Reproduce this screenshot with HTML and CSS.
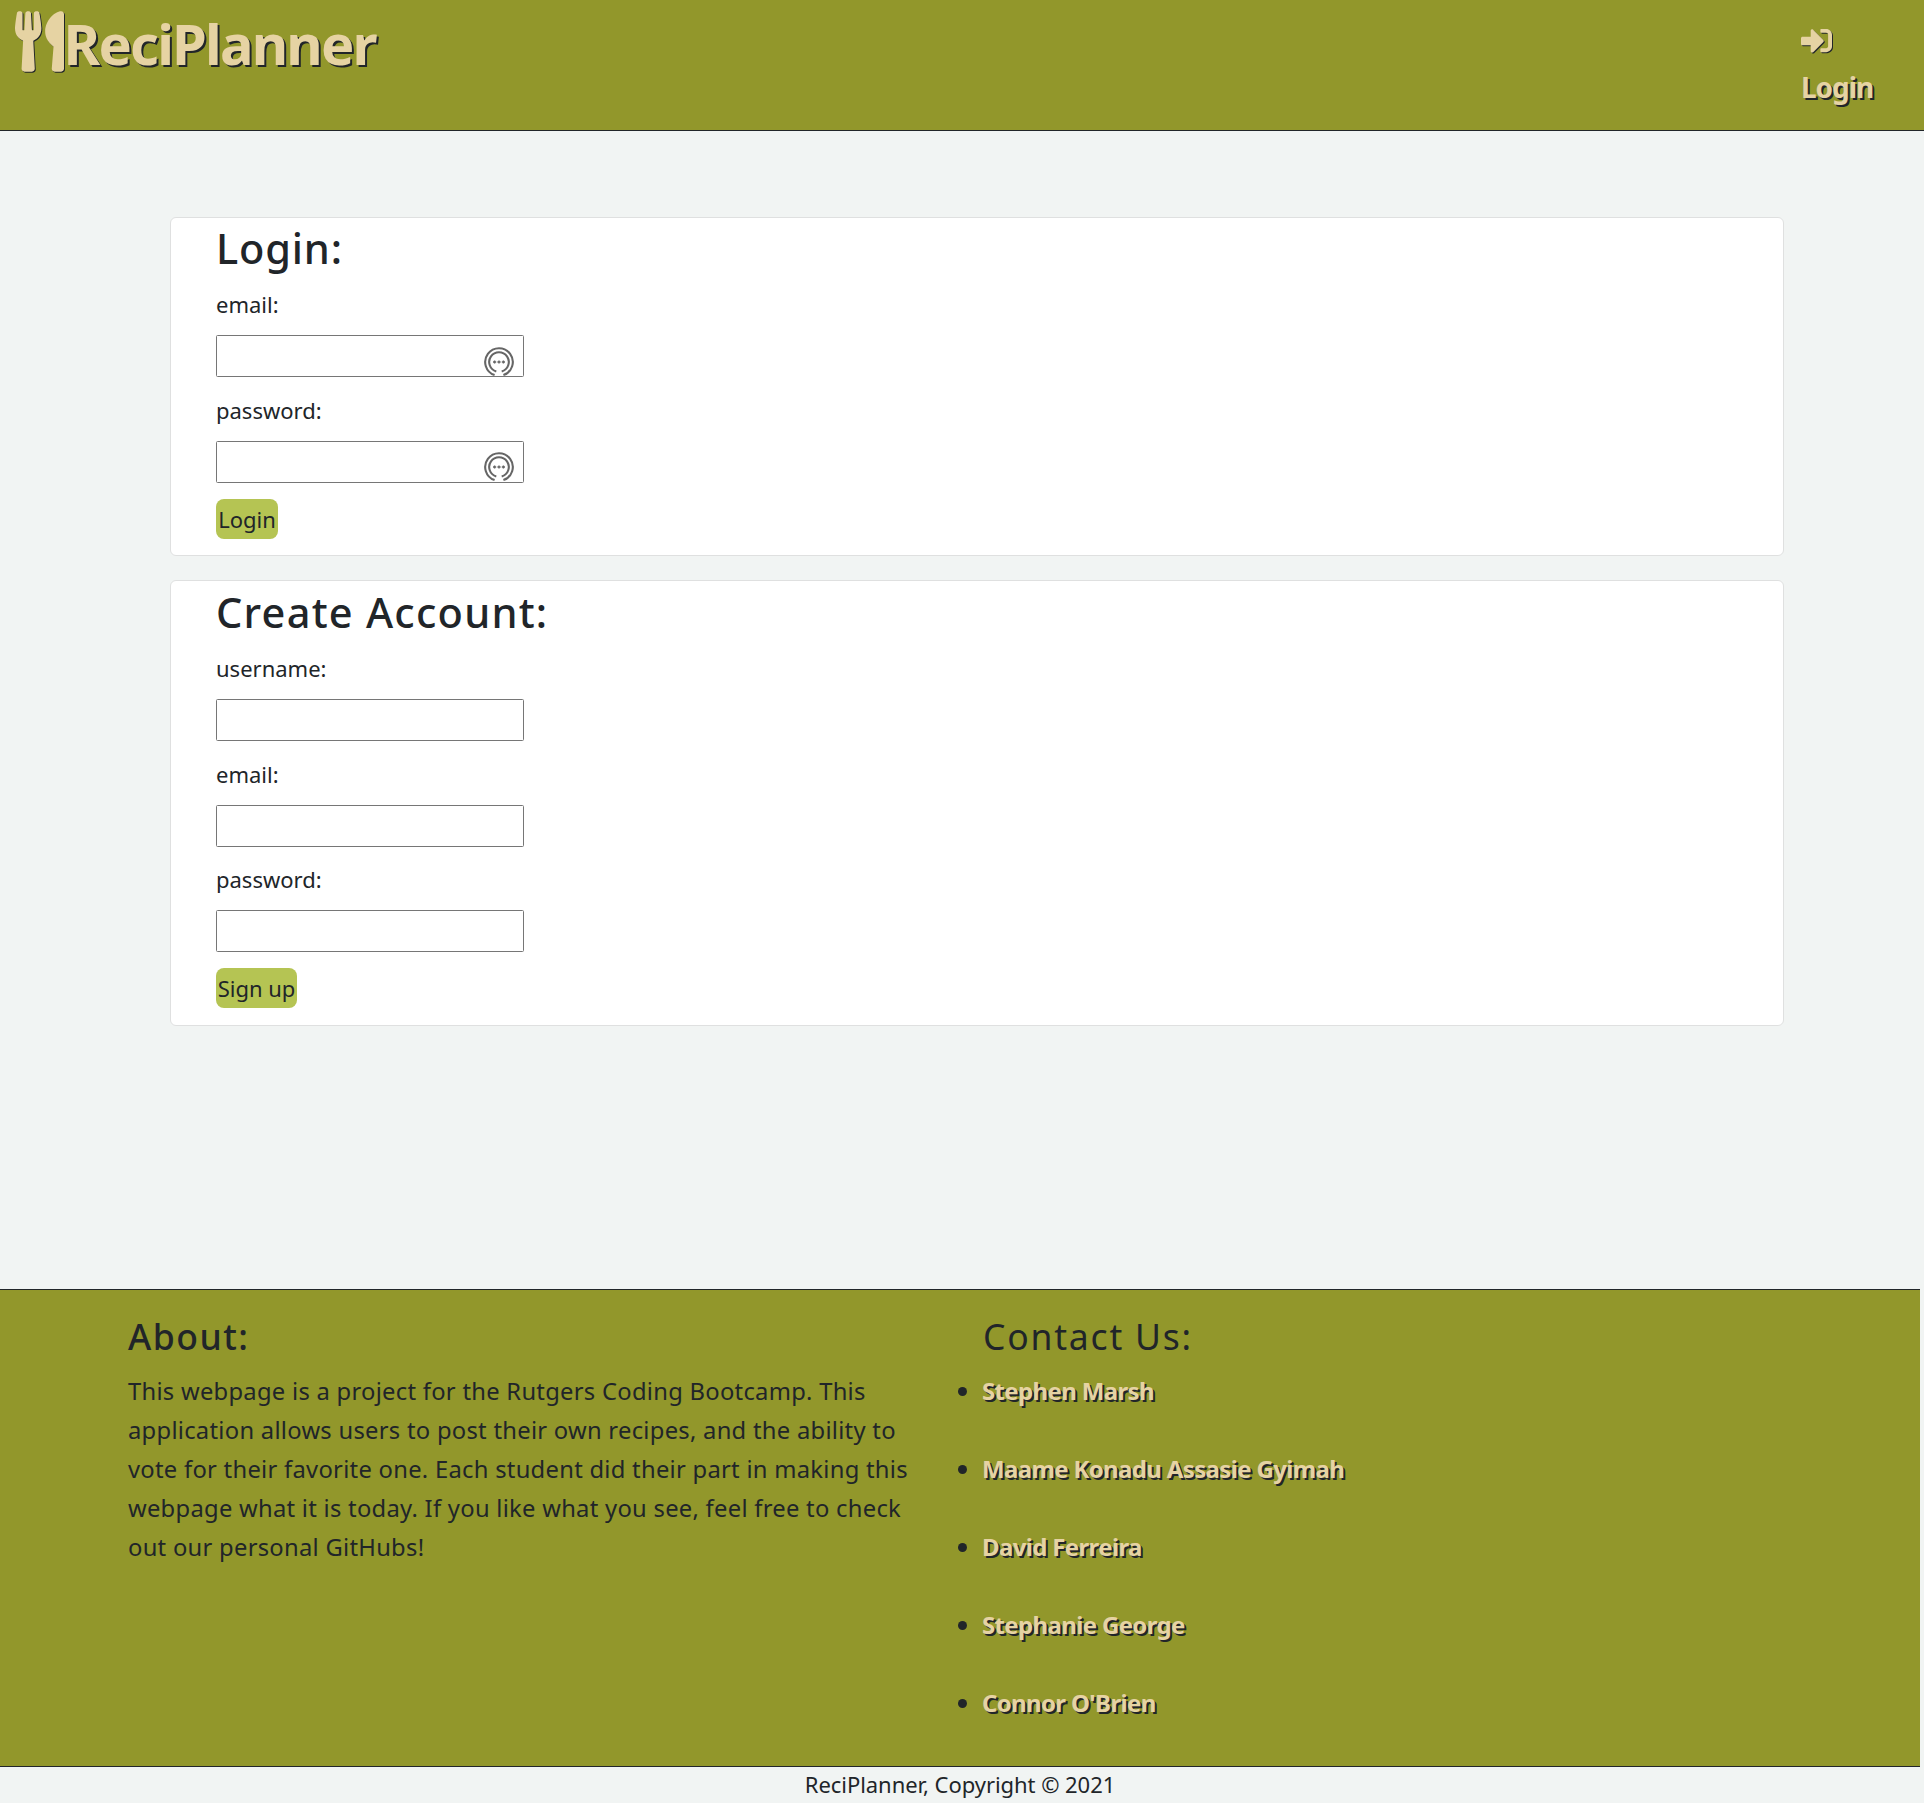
FILE: index.html
```html
<!DOCTYPE html>
<html lang="en">
<head>
<meta charset="utf-8">
<title>ReciPlanner</title>
<link rel="stylesheet" href="styles.css">
</head>
<body>
<header class="header">
  <a class="brand">
    <svg class="brand-icon" viewBox="0 0 416 512"><path d="M207.9 15.2c.8 4.7 16.1 94.5 16.1 128.8 0 52.3-27.8 89.6-68.9 104.6L168 486.7c.7 13.7-10.2 25.3-24 25.3H80c-13.7 0-24.7-11.5-24-25.3l12.9-238.1C27.7 233.6 0 196.2 0 144 0 109.6 15.3 19.9 16.1 15.2 19.3-5.1 61.4-5.4 64 16.3v141.2c1.3 3.4 15.1 3.2 16 0 1.4-25.3 7.9-139.2 8-141.8 3.3-20.8 44.7-20.8 47.9 0 .2 2.7 6.6 116.5 8 141.8.9 3.2 14.8 3.4 16 0V16.3c2.6-21.6 44.8-21.4 47.9-1.1zm119.2 285.7l-15 185.1c-1.2 14 9.9 26 23.9 26h56c13.3 0 24-10.7 24-24V24c0-13.2-10.7-24-24-24-82.5 0-221.4 178.5-64.9 300.9z"/></svg>
    <span class="brand-name">ReciPlanner</span>
  </a>
  <a class="nav-login">
    <svg class="nav-icon" viewBox="0 0 512 512"><path d="M416 448h-84c-6.6 0-12-5.4-12-12v-40c0-6.6 5.4-12 12-12h84c17.7 0 32-14.3 32-32V160c0-17.7-14.3-32-32-32h-84c-6.6 0-12-5.4-12-12V76c0-6.6 5.4-12 12-12h84c53 0 96 43 96 96v192c0 53-43 96-96 96zm-47-201L201 79c-15-15-41-4.5-41 17v96H24c-13.3 0-24 10.7-24 24v96c0 13.3 10.7 24 24 24h136v96c0 21.5 26 32 41 17l168-168c9.3-9.4 9.3-24.6 0-34z"/></svg>
    <span class="nav-text">Login</span>
  </a>
</header>

<main class="main">
  <form class="card">
    <h1 class="card-title title-login">Login:</h1>
    <label class="label" for="login-email">email:</label>
    <div class="field">
      <input class="input" id="login-email" type="text">
      <svg class="field-icon" viewBox="0 0 30 30"><path d="M10.6 28.1A13.8 13.8 0 1 1 19.4 28.1M12.3 24.4A9.8 9.8 0 1 1 17.7 24.4" fill="none" stroke="#666" stroke-width="2.1"/><path d="M9 15h3.2M10.6 13.4v3.2M13.4 15h3.2M15 13.4v3.2M17.8 15h3.2M19.4 13.4v3.2" stroke="#666" stroke-width="1.4"/></svg>
    </div>
    <label class="label" for="login-password">password:</label>
    <div class="field">
      <input class="input" id="login-password" type="password">
      <svg class="field-icon" viewBox="0 0 30 30"><path d="M10.6 28.1A13.8 13.8 0 1 1 19.4 28.1M12.3 24.4A9.8 9.8 0 1 1 17.7 24.4" fill="none" stroke="#666" stroke-width="2.1"/><path d="M9 15h3.2M10.6 13.4v3.2M13.4 15h3.2M15 13.4v3.2M17.8 15h3.2M19.4 13.4v3.2" stroke="#666" stroke-width="1.4"/></svg>
    </div>
    <button class="button button-login" type="button">Login</button>
  </form>

  <form class="card card-signup">
    <h1 class="card-title">Create Account:</h1>
    <label class="label" for="new-username">username:</label>
    <div class="field"><input class="input" id="new-username" type="text"></div>
    <label class="label" for="new-email">email:</label>
    <div class="field"><input class="input" id="new-email" type="text"></div>
    <label class="label" for="new-password">password:</label>
    <div class="field"><input class="input" id="new-password" type="password"></div>
    <button class="button button-signup" type="button">Sign up</button>
  </form>
</main>

<footer class="footer">
  <div class="footer-columns">
    <section class="about">
      <h2 class="footer-title">About:</h2>
      <p class="about-text">This webpage is a project for the Rutgers Coding Bootcamp. This application allows users to post their own recipes, and the ability to vote for their favorite one. Each student did their part in making this webpage what it is today. If you like what you see, feel free to check out our personal GitHubs!</p>
    </section>
    <section class="contact">
      <h2 class="footer-title contact-title">Contact Us:</h2>
      <ul class="contact-list">
        <li><a>Stephen Marsh</a></li>
        <li><a>Maame Konadu Assasie Gyimah</a></li>
        <li><a>David Ferreira</a></li>
        <li><a>Stephanie George</a></li>
        <li><a>Connor O'Brien</a></li>
      </ul>
    </section>
  </div>
  <p class="copyright">ReciPlanner, Copyright © 2021</p>
</footer>
</body>
</html>
```
FILE: styles.css
```css
* { box-sizing: border-box; }

body {
  margin: 0;
  min-height: 1803px;
  display: flex;
  flex-direction: column;
  background: #f1f4f3;
  color: #212529;
  font-family: "Noto Sans", sans-serif;
  font-size: 22px;
  line-height: 36px;
}

h1, h2, p, ul { margin: 0; padding: 0; }

.header {
  height: 131px;
  padding: 11px 51px 0 14.5px;
  display: flex;
  justify-content: space-between;
  align-items: flex-start;
  background: #92972b;
  border-bottom: 1px solid #212529;
}

.brand { display: flex; align-items: flex-start; color: #e6d3a3; }

.brand-icon, .nav-icon {
  display: block;
  fill: #e6d3a3;
  overflow: visible;
  filter: drop-shadow(1.5px 1.5px 0 #212529);
}

.brand-icon { width: 49px; height: 61px; }

.brand-name {
  margin-top: 2px;
  font-size: 56px;
  font-weight: 700;
  line-height: 60px;
  letter-spacing: -1.8px;
  text-shadow: 2px 2px 0 #212529;
}

.nav-login { width: 72px; padding-top: 14px; color: #e6d3a3; }

.nav-icon { width: 31px; height: 31px; margin-bottom: 11px; }

.nav-text {
  display: block;
  font-size: 28px;
  font-weight: 700;
  line-height: 40px;
  letter-spacing: -1.06px;
  text-shadow: 2px 2px 0 #212529;
}

.main {
  width: 1614px;
  margin: 86px 0 0 170px;
  display: flex;
  flex-direction: column;
  gap: 24px;
}

.card {
  padding: 5px 45px 16.33px;
  display: flex;
  flex-direction: column;
  align-items: flex-start;
  background: #fff;
  border: 1px solid #dfe0e0;
  border-radius: 6px;
}

.card-signup { padding-top: 6px; }

.card-title {
  margin-bottom: 14px;
  font-size: 41.5px;
  font-weight: 500;
  line-height: 50px;
  letter-spacing: 1.25px;
}

.title-login { letter-spacing: 0.85px; }

.label { margin-top: -1px; }

.field { position: relative; margin: 13px 0 15.67px; }

.input {
  display: block;
  width: 308px;
  height: 42px;
  background: #fff;
  border: 1px solid #767676;
  border-radius: 1.5px;
}

.field-icon {
  position: absolute;
  right: 10.5px;
  top: 11.5px;
  width: 30px;
  height: 30px;
}

.button {
  height: 40px;
  margin-top: 0.33px;
  padding: 0;
  background: #b5c453;
  border: 0;
  border-radius: 8px;
  color: #212529;
  font: inherit;
  white-space: nowrap;
}

.button-login { width: 62px; }
.button-signup { width: 81px; }

.footer { width: 1920px; margin-top: auto; }

.footer-columns {
  height: 478px;
  padding: 25px 0 0 128px;
  display: flex;
  background: #92972b;
  border-top: 1px solid #212529;
  border-bottom: 1px solid #212529;
}

.about { width: 795px; }

.contact { margin-left: 60px; }

.footer-title {
  margin-bottom: 15px;
  font-size: 35.5px;
  font-weight: 500;
  line-height: 42px;
  letter-spacing: 1.5px;
}

.contact-title { font-weight: 400; letter-spacing: 1.8px; }

.about-text { font-size: 23.75px; line-height: 39px; letter-spacing: 0.28px; }

.contact-list {
  margin-left: -25px;
  display: flex;
  flex-direction: column;
  gap: 39px;
  list-style: none;
}

.contact-list li {
  display: flex;
  align-items: center;
  gap: 15px;
  color: #e6d3a3;
  font-size: 24px;
  font-weight: 700;
  line-height: 39px;
  letter-spacing: -0.65px;
  text-shadow: 2px 2px 0 #212529;
}

.contact-list li::before {
  content: "";
  width: 9px;
  height: 9px;
  border-radius: 50%;
  background: #212529;
}

.contact-list a { margin-top: -1px; margin-bottom: 1px; }

.copyright { margin-top: -1px; margin-bottom: 1px; text-align: center; letter-spacing: -0.05px; }
```
